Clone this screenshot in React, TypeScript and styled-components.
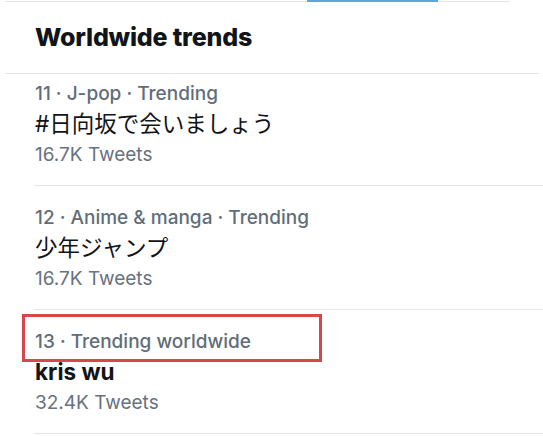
import React from "react";
import styled, { createGlobalStyle } from "styled-components";

const Global = createGlobalStyle`
  html, body { margin: 0; padding: 0; background: #ffffff; }
  body {
    font-family: Inter, "Noto Sans CJK JP", "Liberation Sans", sans-serif;
    -webkit-font-smoothing: antialiased;
  }
`;

const Page = styled.div`
  width: 543px;
  height: 436px;
  overflow: hidden;
  background: #ffffff;
  display: flex;
  flex-direction: column;
`;

const TabRail = styled.div`
  display: flex;
  align-items: flex-end;
  height: 2px;
  padding-left: 5px;
  width: 505px;
`;

const RailSegment = styled.div<{ $w: number; $active?: boolean }>`
  flex: 0 0 ${(p) => p.$w}px;
  height: ${(p) => (p.$active ? 2 : 1)}px;
  background: ${(p) => (p.$active ? "#5aa6dd" : "#e3e6e9")};
`;

const Header = styled.h2`
  margin: 0 4px 0 5px;
  padding: 19px 0 20px 30px;
  font-size: 25px;
  line-height: 32px;
  font-weight: 800;
  color: #111418;
  letter-spacing: -0.2px;
  border-bottom: 1px solid #e3e6e9;
`;

const List = styled.div`
  display: flex;
  flex-direction: column;
`;

const Item = styled.div<{ $first?: boolean }>`
  display: flex;
  flex-direction: column;
  margin-left: 34px;
  padding: ${(p) => (p.$first ? 8 : 20)}px 0 18px 1px;
  border-bottom: 1px solid #e3e6e9;
`;

const MetaRow = styled.div`
  position: relative;
  font-size: 19px;
  line-height: 24px;
  font-weight: 500;
  color: #616d79;
  white-space: nowrap;
`;

const Highlight = styled.span`
  position: absolute;
  left: -13px;
  top: -16px;
  width: 300px;
  height: 48px;
  box-sizing: border-box;
  border: 3px solid #d8474e;
  pointer-events: none;
`;

const Title = styled.div<{ $latin?: boolean }>`
  margin-top: 4px;
  font-size: 22.5px;
  line-height: 28px;
  color: #111418;
  font-weight: ${(p) => (p.$latin ? 700 : 400)};
  white-space: nowrap;
`;

const Count = styled.div`
  margin-top: 5px;
  font-size: 19px;
  line-height: 24px;
  color: #67727e;
`;

type Trend = {
  rank: number;
  context: string;
  title: string;
  latin?: boolean;
  count: string;
  highlighted?: boolean;
};

const trends: Trend[] = [
  { rank: 11, context: "J-pop · Trending", title: "#日向坂で会いましょう", count: "16.7K Tweets" },
  { rank: 12, context: "Anime & manga · Trending", title: "少年ジャンプ", count: "16.7K Tweets" },
  { rank: 13, context: "Trending worldwide", title: "kris wu", latin: true, count: "32.4K Tweets", highlighted: true },
];

export default function App() {
  return (
    <Page>
      <Global />
      <TabRail>
        <RailSegment $w={302} />
        <RailSegment $w={131} $active />
        <RailSegment $w={72} />
      </TabRail>
      <Header>Worldwide trends</Header>
      <List>
        {trends.map((t, i) => (
          <Item key={t.rank} $first={i === 0}>
            <MetaRow>
              {t.rank} · {t.context}
              {t.highlighted && <Highlight />}
            </MetaRow>
            <Title $latin={t.latin}>{t.title}</Title>
            <Count>{t.count}</Count>
          </Item>
        ))}
      </List>
    </Page>
  );
}
